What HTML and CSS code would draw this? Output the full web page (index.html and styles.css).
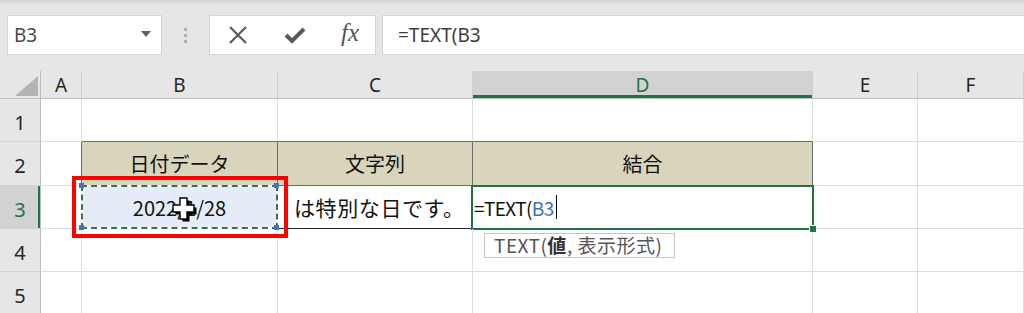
FILE: index.html
```html
<!DOCTYPE html>
<html lang="ja">
	<head>
		<meta charset="UTF-8" />
		<meta name="viewport" content="width=device-width, initial-scale=1.0" />
		<title>TEXT関数</title>
		<link rel="stylesheet" href="styles.css">
	</head>
	<body>
		<div class="toolbar">
			<div class="namebox">
				<span>B3</span>
				<svg class="dropdown" width="10" height="6" viewBox="0 0 10 6"><path d="M0 0 H10 L5 6 Z" fill="#606060"/></svg>
			</div>
			<div class="grip"><i></i><i></i><i></i></div>
			<div class="fxbox">
				<svg width="22" height="22" viewBox="0 0 22 22"><path d="M3 3 L19 19 M19 3 L3 19" stroke="#5a5a5a" stroke-width="2.2" fill="none"/></svg>
				<svg width="22" height="22" viewBox="0 0 22 22"><path d="M2 11 L8 17 L20 5" stroke="#5a5a5a" stroke-width="4" fill="none"/></svg>
				<span class="fx">fx</span>
			</div>
			<div class="formula">=TEXT(B3</div>
		</div>

		<div class="sheet">
			<!-- 見出し行 -->
			<div class="corner"><svg width="41" height="28"><path d="M15 25 H38 V5 Z" fill="#b4b4b4"/></svg></div>
			<div class="colhead">A</div>
			<div class="colhead">B</div>
			<div class="colhead">C</div>
			<div class="colhead active">D</div>
			<div class="colhead">E</div>
			<div class="colhead">F</div>

			<!-- 1行目 -->
			<div class="rowhead">1</div>
			<div class="cell"></div>
			<div class="cell under"></div>
			<div class="cell under"></div>
			<div class="cell under"></div>
			<div class="cell"></div>
			<div class="cell"></div>

			<!-- 2行目 -->
			<div class="rowhead">2</div>
			<div class="cell before"></div>
			<div class="cell head">日付データ</div>
			<div class="cell head">文字列</div>
			<div class="cell head">結合</div>
			<div class="cell"></div>
			<div class="cell"></div>

			<!-- 3行目 -->
			<div class="rowhead active">3</div>
			<div class="cell before"></div>
			<div class="cell copied">
				2022/1/28
				<b class="h tl"></b><b class="h tr"></b><b class="h bl"></b><b class="h br"></b>
			</div>
			<div class="cell boxed text">は特別な日です。</div>
			<div class="cell editing">=TEXT(<span class="ref">B3</span><span class="caret"></span><b class="fill"></b></div>
			<div class="cell"></div>
			<div class="cell"></div>

			<!-- 4行目 -->
			<div class="rowhead">4</div>
			<div class="cell"></div>
			<div class="cell"></div>
			<div class="cell"></div>
			<div class="cell"></div>
			<div class="cell"></div>
			<div class="cell"></div>

			<!-- 5行目 -->
			<div class="rowhead">5</div>
			<div class="cell"></div>
			<div class="cell"></div>
			<div class="cell"></div>
			<div class="cell"></div>
			<div class="cell"></div>
			<div class="cell"></div>

			<div class="redbox"></div>
			<svg class="cursor" width="26" height="28" viewBox="0 0 26 28">
				<path d="M10 3 H17 V10 H24 V17 H17 V24 H10 V17 H3 V10 H10 Z" fill="#000" transform="translate(1.5 1.5)"/>
				<path d="M9 2 H16 V9 H23 V16 H16 V23 H9 V16 H2 V9 H9 Z" fill="#fff" stroke="#000" stroke-width="1.4"/>
			</svg>
			<div class="tooltip">TEXT(<b>値</b>, 表示形式)</div>
		</div>
	</body>
</html>
```

FILE: styles.css
```css
body {
	margin: 0;
	background-color: #fff;
	font-family: "Noto Sans CJK JP", "Noto Sans", sans-serif;
	overflow: hidden;
}
.toolbar {
	height: 71px;
	box-sizing: border-box;
	padding: 15px 0 0 7px;
	display: flex;
	align-items: flex-start;
	background: linear-gradient(#d2d2d2, #e6e6e6 5px);
}
.namebox,
.fxbox,
.formula {
	height: 40px;
	box-sizing: border-box;
	background-color: #fff;
	border: 1px solid #d5d5d5;
	display: flex;
	align-items: center;
}
.namebox {
	width: 155px;
	padding: 0 10px 0 6px;
	justify-content: space-between;
	font-family: "Noto Sans", sans-serif;
	font-size: 19px;
	color: #4a4a4a;
}
.dropdown {
	margin-top: -3px;
}
.grip {
	width: 47px;
	height: 40px;
	display: flex;
	flex-direction: column;
	align-items: center;
	justify-content: center;
	gap: 3px;
}
.grip i {
	width: 3px;
	height: 3px;
	background-color: #b0b0b0;
}
.fxbox {
	width: 167px;
	padding: 0 16px 0 17px;
	justify-content: space-between;
}
.fx {
	font-family: "Liberation Serif", serif;
	font-style: italic;
	font-size: 25px;
	color: #555;
	margin-top: -4px;
}
.formula {
	flex: 1;
	margin-left: 6px;
	margin-right: -2px;
	padding-left: 15px;
	font-family: "Noto Sans", sans-serif;
	font-size: 19px;
	color: #3c3c3c;
}
.sheet {
	position: relative;
	display: grid;
	grid-template-columns: 41px 41px 196px 195px 340px 105px 106px;
	grid-template-rows: 28px 43px 44px 43px 43px 43px;
}
.sheet > div {
	box-sizing: border-box;
}
.corner,
.colhead,
.rowhead {
	background-color: #e6e6e6;
	border-right: 1px solid #cfcfcf;
	border-bottom: 1px solid #bdbdbd;
	font-family: "Noto Sans", sans-serif;
	font-size: 19px;
	color: #262626;
	display: flex;
	align-items: center;
	justify-content: center;
}
.corner {
	border-right-color: #bdbdbd;
}
.rowhead {
	border-right: 1px solid #bdbdbd;
	border-bottom: 1px solid #d2d2d2;
	font-size: 20px;
	padding-top: 4px;
}
.colhead.active {
	background-color: #d2d2d2;
	color: #217346;
	box-shadow: inset 0 -3px 0 #217346;
}
.rowhead.active {
	background-color: #d2d2d2;
	color: #217346;
	box-shadow: inset -2px 0 0 #217346;
}
.cell {
	position: relative;
	border-right: 1px solid #dedede;
	border-bottom: 1px solid #dedede;
	font-size: 20px;
	color: #111;
	display: flex;
	align-items: center;
	justify-content: center;
}
.cell.under {
	border-bottom-color: #6a6a6a;
}
.cell.before {
	border-right-color: #6a6a6a;
}
.cell.head {
	background-color: #d9d5bd;
	border-right-color: #6a6a6a;
	border-bottom-color: #6a6a6a;
}
.cell.boxed {
	border-right-color: #6a6a6a;
	border-bottom-color: #222;
}
.cell.text {
	justify-content: flex-start;
	padding-left: 16px;
	font-size: 21px;
	letter-spacing: 0.6px;
}
.copied {
	background-color: #e5ecf7;
}
/* コピー範囲の点線 */
.copied::before,
.copied::after {
	content: "";
	position: absolute;
	inset: -1px;
	border: 2px solid #fff;
}
.copied::after {
	border: 2px dashed #34705f;
}
.h {
	position: absolute;
	width: 5px;
	height: 5px;
	background-color: #4472c4;
	z-index: 2;
}
.h.tl { left: -3px; top: -3px; }
.h.tr { right: -2px; top: -3px; }
.h.bl { left: -3px; bottom: -2px; }
.h.br { right: -2px; bottom: -2px; }
.editing {
	justify-content: flex-start;
	padding-left: 1px;
	font-size: 19px;
	letter-spacing: -0.6px;
}
.editing::after {
	content: "";
	position: absolute;
	top: -1px;
	left: -2px;
	right: -2px;
	bottom: -2px;
	border: 2px solid #217346;
}
.ref {
	color: #3b6fc4;
}
.caret {
	width: 1px;
	height: 24px;
	margin-left: 2px;
	background-color: #000;
}
.fill {
	position: absolute;
	right: -5px;
	bottom: -5px;
	width: 6px;
	height: 6px;
	background-color: #217346;
	border: 1px solid #fff;
	z-index: 2;
}
.redbox {
	position: absolute;
	left: 72px;
	top: 105px;
	width: 216px;
	height: 62px;
	box-sizing: border-box;
	border: 4px solid #f00;
}
.cursor {
	position: absolute;
	left: 171px;
	top: 125px;
}
.tooltip {
	position: absolute;
	left: 484px;
	top: 162px;
	width: 191px;
	height: 25px;
	box-sizing: border-box;
	border: 1px solid #c6c6c6;
	background-color: #fff;
	padding-left: 9px;
	font-size: 19px;
	letter-spacing: 0.5px;
	line-height: 22px;
	color: #555;
	white-space: nowrap;
}
.tooltip b {
	color: #333;
}
```
